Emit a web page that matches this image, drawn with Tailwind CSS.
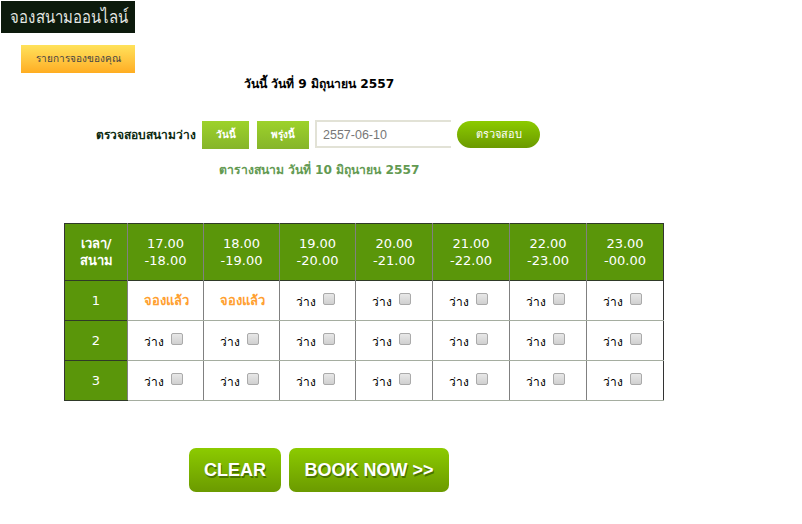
<!DOCTYPE html>
<html><head><meta charset="utf-8"><script src="https://cdn.jsdelivr.net/npm/@tailwindcss/browser@4"></script></head>
<body class="bg-white font-['DejaVu_Sans','Noto_Sans',sans-serif] text-black">
<div class="w-[802px] h-[524px] overflow-hidden relative">
  <div class="pl-px pt-px"><div class="w-[134px] h-[32px] bg-[#0c1a0c] text-[#e4e8e4] text-[18px] leading-[32px] pl-[9px] whitespace-nowrap overflow-hidden font-['Liberation_Sans','Noto_Sans',sans-serif]"><span class="inline-block origin-left scale-x-[0.83]">จองสนามออนไลน์</span></div></div>
  <div class="ml-[21px] mt-[12px] w-[114px] h-[28px] bg-gradient-to-b from-[#ffe25a] to-[#ffad20] text-[10px] leading-[28px] text-center font-medium text-[#444]">รายการจองของคุณ</div>
  <div class="w-[638px] mt-[1px] text-center text-[12.2px] leading-[20px] font-bold">วันนี้ วันที่ 9 มิถุนายน 2557</div>
  <div class="flex items-center mt-[26px] h-[30px] pl-[96px]">
    <span class="text-[12px] font-bold text-[#0c2a10] w-[106px]">ตรวจสอบสนามว่าง</span>
    <span class="w-[47px] h-[28px] bg-gradient-to-b from-[#9dd22a] to-[#86b52a] text-white text-[10px] font-bold leading-[28px] text-center">วันนี้</span>
    <span class="ml-[8px] w-[52px] h-[28px] bg-gradient-to-b from-[#9dd22a] to-[#86b52a] text-white text-[10px] font-bold leading-[28px] text-center">พรุ่งนี้</span>
    <input value="2557-06-10" class="ml-[6px] mb-[2px] w-[136px] h-[28px] pl-[6px] pt-[1px] bg-white border-2 border-r-0 border-[#e2e2d6] text-[12.5px] text-[#777] font-['Liberation_Sans',sans-serif] outline-none">
    <span class="ml-[6px] mb-[1px] w-[83px] h-[27px] rounded-full bg-gradient-to-b from-[#8ccb00] to-[#6b9a00] text-white text-[11px] leading-[27px] text-center">ตรวจสอบ</span>
  </div>
  <div class="w-[638px] mt-[10px] text-center text-[12.2px] leading-[20px] font-bold text-[#639a52]">ตารางสนาม วันที่ 10 มิถุนายน 2557</div>
  <table class="ml-[64px] mt-[43px] w-[599px] table-fixed border-collapse text-[13px]">
    <colgroup><col class="w-[63px]"><col class="w-[76px]"><col class="w-[76px]"><col class="w-[76px]"><col class="w-[77px]"><col class="w-[77px]"><col class="w-[77px]"><col class="w-[77px]"></colgroup>
    <thead>
      <tr class="h-[57px] bg-[#5a960a] text-white text-center leading-[17px] border-t border-[#2f3a28]">
        <th class="font-bold border-l border-l-[#333] border-r border-r-[#808080]">เวลา/<br>สนาม</th>
        <th class="font-normal border-r border-[#808080]">17.00<br>-18.00</th>
        <th class="font-normal border-r border-[#808080]">18.00<br>-19.00</th>
        <th class="font-normal border-r border-[#808080]">19.00<br>-20.00</th>
        <th class="font-normal border-r border-[#808080]">20.00<br>-21.00</th>
        <th class="font-normal border-r border-[#808080]">21.00<br>-22.00</th>
        <th class="font-normal border-r border-[#808080]">22.00<br>-23.00</th>
        <th class="font-normal border-r border-r-[#333]">23.00<br>-00.00</th>
      </tr>
    </thead>
    <tbody>
      <tr class="h-[40px] border-t border-[#2f3a28]">
        <td class="bg-[#5a960a] text-white text-center border-l border-l-[#333] border-r border-r-[#808080]">1</td>
        <td class="pl-[16px] border-r border-r-[#808080] border-b border-b-[#a5ada0] text-[#ffa030] font-bold text-[13px]">จองแล้ว</td>
        <td class="pl-[16px] border-r border-r-[#808080] border-b border-b-[#a5ada0] text-[#ffa030] font-bold text-[13px]">จองแล้ว</td>
        <td class="pl-[16px] border-r border-r-[#808080] border-b border-b-[#a5ada0] text-[12px]"><span class="inline-flex items-center"><span class="mt-[2px]">ว่าง</span><input type="checkbox" class="appearance-none ml-[7px] mb-[3px] w-[12px] h-[12px] rounded-[2px] border border-[#aaa] bg-gradient-to-b from-[#e8e8e8] to-[#d0d0d0]"></span></td>
        <td class="pl-[16px] border-r border-r-[#808080] border-b border-b-[#a5ada0] text-[12px]"><span class="inline-flex items-center"><span class="mt-[2px]">ว่าง</span><input type="checkbox" class="appearance-none ml-[7px] mb-[3px] w-[12px] h-[12px] rounded-[2px] border border-[#aaa] bg-gradient-to-b from-[#e8e8e8] to-[#d0d0d0]"></span></td>
        <td class="pl-[16px] border-r border-r-[#808080] border-b border-b-[#a5ada0] text-[12px]"><span class="inline-flex items-center"><span class="mt-[2px]">ว่าง</span><input type="checkbox" class="appearance-none ml-[7px] mb-[3px] w-[12px] h-[12px] rounded-[2px] border border-[#aaa] bg-gradient-to-b from-[#e8e8e8] to-[#d0d0d0]"></span></td>
        <td class="pl-[16px] border-r border-r-[#808080] border-b border-b-[#a5ada0] text-[12px]"><span class="inline-flex items-center"><span class="mt-[2px]">ว่าง</span><input type="checkbox" class="appearance-none ml-[7px] mb-[3px] w-[12px] h-[12px] rounded-[2px] border border-[#aaa] bg-gradient-to-b from-[#e8e8e8] to-[#d0d0d0]"></span></td>
        <td class="pl-[16px] border-r border-r-[#333] border-b border-b-[#a5ada0] text-[12px]"><span class="inline-flex items-center"><span class="mt-[2px]">ว่าง</span><input type="checkbox" class="appearance-none ml-[7px] mb-[3px] w-[12px] h-[12px] rounded-[2px] border border-[#aaa] bg-gradient-to-b from-[#e8e8e8] to-[#d0d0d0]"></span></td>
      </tr>
      <tr class="h-[40px] border-t border-[#2f3a28]">
        <td class="bg-[#5a960a] text-white text-center border-l border-l-[#333] border-r border-r-[#808080]">2</td>
        <td class="pl-[16px] border-r border-r-[#808080] border-b border-b-[#a5ada0] text-[12px]"><span class="inline-flex items-center"><span class="mt-[2px]">ว่าง</span><input type="checkbox" class="appearance-none ml-[7px] mb-[3px] w-[12px] h-[12px] rounded-[2px] border border-[#aaa] bg-gradient-to-b from-[#e8e8e8] to-[#d0d0d0]"></span></td>
        <td class="pl-[16px] border-r border-r-[#808080] border-b border-b-[#a5ada0] text-[12px]"><span class="inline-flex items-center"><span class="mt-[2px]">ว่าง</span><input type="checkbox" class="appearance-none ml-[7px] mb-[3px] w-[12px] h-[12px] rounded-[2px] border border-[#aaa] bg-gradient-to-b from-[#e8e8e8] to-[#d0d0d0]"></span></td>
        <td class="pl-[16px] border-r border-r-[#808080] border-b border-b-[#a5ada0] text-[12px]"><span class="inline-flex items-center"><span class="mt-[2px]">ว่าง</span><input type="checkbox" class="appearance-none ml-[7px] mb-[3px] w-[12px] h-[12px] rounded-[2px] border border-[#aaa] bg-gradient-to-b from-[#e8e8e8] to-[#d0d0d0]"></span></td>
        <td class="pl-[16px] border-r border-r-[#808080] border-b border-b-[#a5ada0] text-[12px]"><span class="inline-flex items-center"><span class="mt-[2px]">ว่าง</span><input type="checkbox" class="appearance-none ml-[7px] mb-[3px] w-[12px] h-[12px] rounded-[2px] border border-[#aaa] bg-gradient-to-b from-[#e8e8e8] to-[#d0d0d0]"></span></td>
        <td class="pl-[16px] border-r border-r-[#808080] border-b border-b-[#a5ada0] text-[12px]"><span class="inline-flex items-center"><span class="mt-[2px]">ว่าง</span><input type="checkbox" class="appearance-none ml-[7px] mb-[3px] w-[12px] h-[12px] rounded-[2px] border border-[#aaa] bg-gradient-to-b from-[#e8e8e8] to-[#d0d0d0]"></span></td>
        <td class="pl-[16px] border-r border-r-[#808080] border-b border-b-[#a5ada0] text-[12px]"><span class="inline-flex items-center"><span class="mt-[2px]">ว่าง</span><input type="checkbox" class="appearance-none ml-[7px] mb-[3px] w-[12px] h-[12px] rounded-[2px] border border-[#aaa] bg-gradient-to-b from-[#e8e8e8] to-[#d0d0d0]"></span></td>
        <td class="pl-[16px] border-r border-r-[#333] border-b border-b-[#a5ada0] text-[12px]"><span class="inline-flex items-center"><span class="mt-[2px]">ว่าง</span><input type="checkbox" class="appearance-none ml-[7px] mb-[3px] w-[12px] h-[12px] rounded-[2px] border border-[#aaa] bg-gradient-to-b from-[#e8e8e8] to-[#d0d0d0]"></span></td>
      </tr>
      <tr class="h-[40px] border-t border-[#2f3a28]">
        <td class="bg-[#5a960a] text-white text-center border-l border-l-[#333] border-r border-r-[#808080] border-b border-b-[#2f3a28]">3</td>
        <td class="pl-[16px] border-r border-r-[#808080] border-b border-b-[#a5ada0] text-[12px]"><span class="inline-flex items-center"><span class="mt-[2px]">ว่าง</span><input type="checkbox" class="appearance-none ml-[7px] mb-[3px] w-[12px] h-[12px] rounded-[2px] border border-[#aaa] bg-gradient-to-b from-[#e8e8e8] to-[#d0d0d0]"></span></td>
        <td class="pl-[16px] border-r border-r-[#808080] border-b border-b-[#a5ada0] text-[12px]"><span class="inline-flex items-center"><span class="mt-[2px]">ว่าง</span><input type="checkbox" class="appearance-none ml-[7px] mb-[3px] w-[12px] h-[12px] rounded-[2px] border border-[#aaa] bg-gradient-to-b from-[#e8e8e8] to-[#d0d0d0]"></span></td>
        <td class="pl-[16px] border-r border-r-[#808080] border-b border-b-[#a5ada0] text-[12px]"><span class="inline-flex items-center"><span class="mt-[2px]">ว่าง</span><input type="checkbox" class="appearance-none ml-[7px] mb-[3px] w-[12px] h-[12px] rounded-[2px] border border-[#aaa] bg-gradient-to-b from-[#e8e8e8] to-[#d0d0d0]"></span></td>
        <td class="pl-[16px] border-r border-r-[#808080] border-b border-b-[#a5ada0] text-[12px]"><span class="inline-flex items-center"><span class="mt-[2px]">ว่าง</span><input type="checkbox" class="appearance-none ml-[7px] mb-[3px] w-[12px] h-[12px] rounded-[2px] border border-[#aaa] bg-gradient-to-b from-[#e8e8e8] to-[#d0d0d0]"></span></td>
        <td class="pl-[16px] border-r border-r-[#808080] border-b border-b-[#a5ada0] text-[12px]"><span class="inline-flex items-center"><span class="mt-[2px]">ว่าง</span><input type="checkbox" class="appearance-none ml-[7px] mb-[3px] w-[12px] h-[12px] rounded-[2px] border border-[#aaa] bg-gradient-to-b from-[#e8e8e8] to-[#d0d0d0]"></span></td>
        <td class="pl-[16px] border-r border-r-[#808080] border-b border-b-[#a5ada0] text-[12px]"><span class="inline-flex items-center"><span class="mt-[2px]">ว่าง</span><input type="checkbox" class="appearance-none ml-[7px] mb-[3px] w-[12px] h-[12px] rounded-[2px] border border-[#aaa] bg-gradient-to-b from-[#e8e8e8] to-[#d0d0d0]"></span></td>
        <td class="pl-[16px] border-r border-r-[#333] border-b border-b-[#a5ada0] text-[12px]"><span class="inline-flex items-center"><span class="mt-[2px]">ว่าง</span><input type="checkbox" class="appearance-none ml-[7px] mb-[3px] w-[12px] h-[12px] rounded-[2px] border border-[#aaa] bg-gradient-to-b from-[#e8e8e8] to-[#d0d0d0]"></span></td>
      </tr>
    </tbody>
  </table>
  <div class="flex ml-[189px] mt-[47px] gap-[8px] font-['Liberation_Sans',sans-serif] font-bold text-white text-[18px] [text-shadow:1px_2px_0_#4a7400]">
    <div class="w-[92px] h-[44px] rounded-[7px] bg-gradient-to-b from-[#8ccb00] to-[#6b9a00] leading-[44px] text-center">CLEAR</div>
    <div class="w-[160px] h-[44px] rounded-[7px] bg-gradient-to-b from-[#8ccb00] to-[#6b9a00] leading-[44px] text-center">BOOK NOW &gt;&gt;</div>
  </div>
</div>
</body></html>
